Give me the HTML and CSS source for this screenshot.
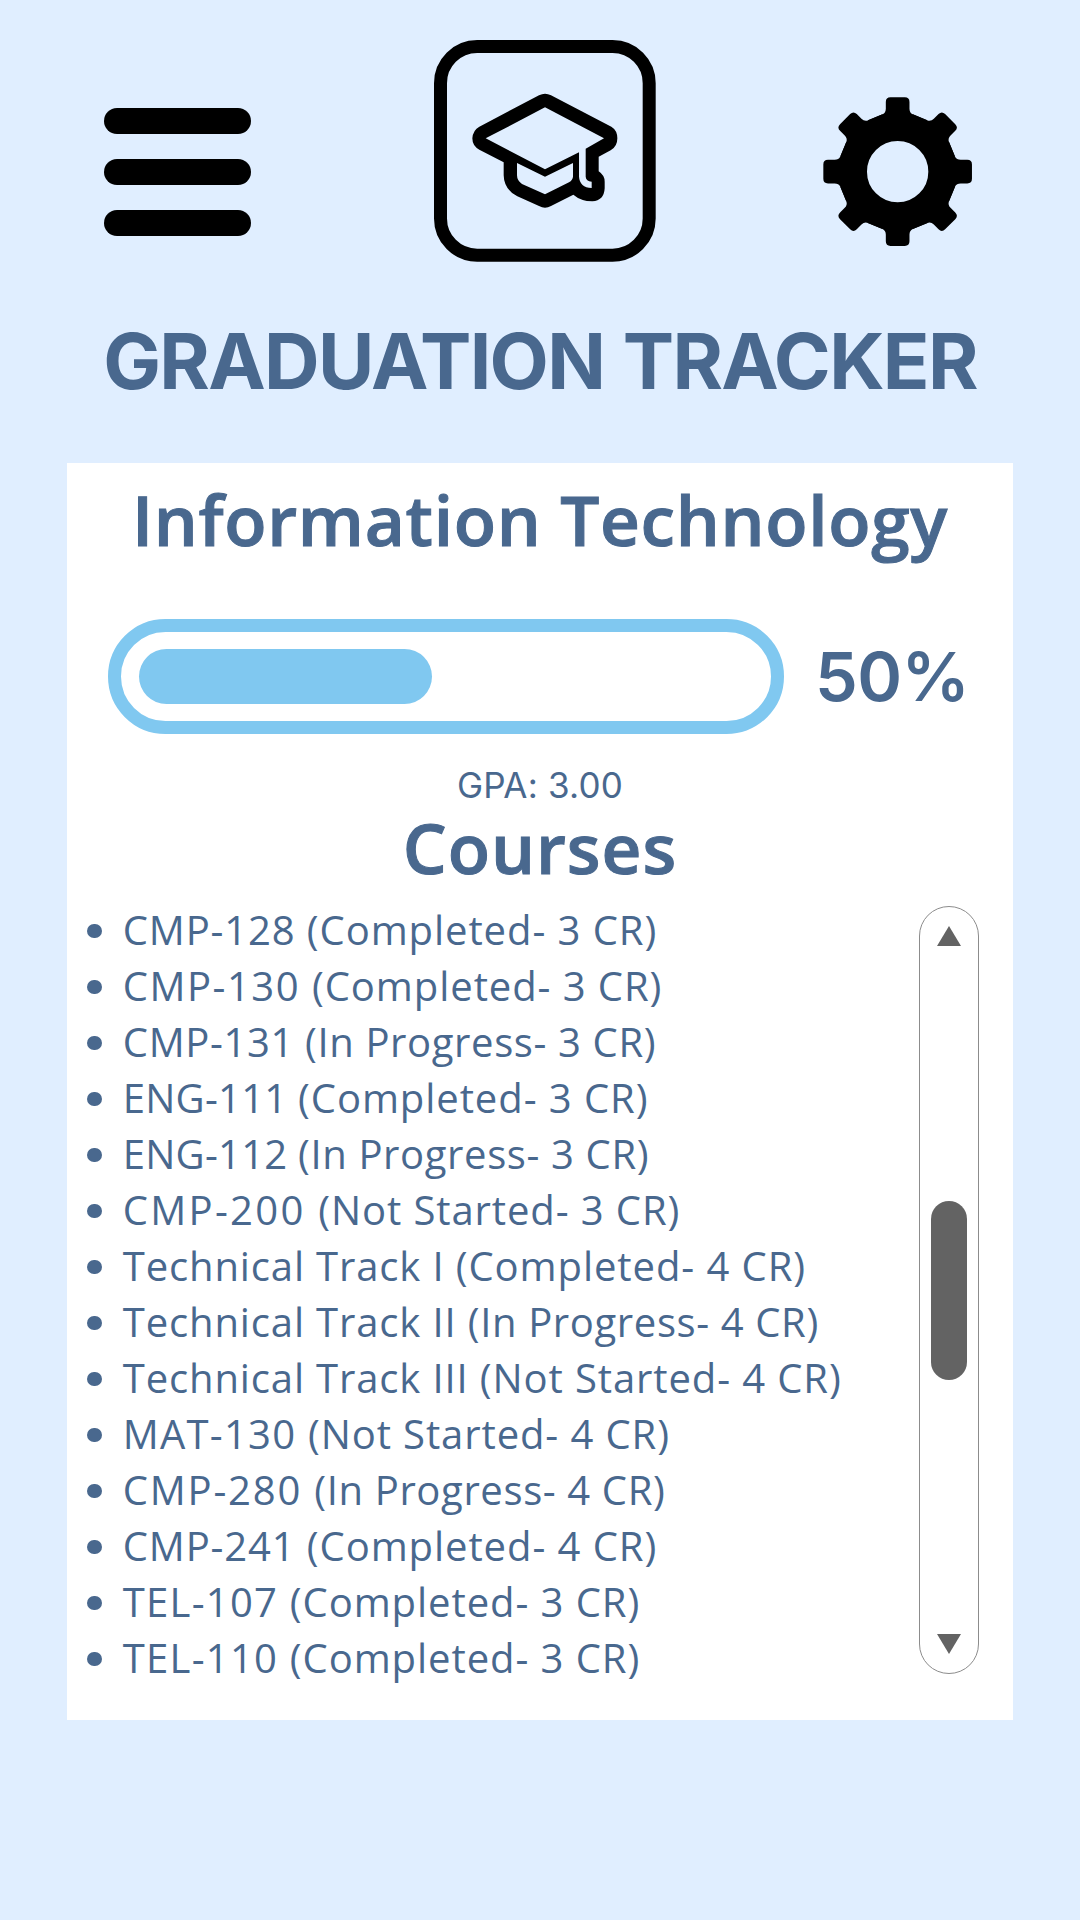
FILE: index.html
```
<!DOCTYPE html>
<html lang="en">
<head>
<meta charset="utf-8">
<title>Graduation Tracker</title>
<link rel="stylesheet" href="styles.css">
</head>
<body>
<header class="topbar">
  <button class="menu" aria-label="Menu"><span class="menu-bar"></span><span class="menu-bar"></span><span class="menu-bar"></span></button>
  <svg class="logo" viewBox="40 30 665 665" aria-hidden="true">
    <rect x="59.5" y="49.5" width="626" height="626" rx="110" fill="none" stroke="#000" stroke-width="39"/>
    <path fill-rule="evenodd" d="M355 196Q373 187 391 196L572 290Q590 301 590 325Q590 350 570 361L534 380V424Q552 436 552 455V475Q550 512 515 514Q480 513 458 494L391 528Q373 538 355 528L290 499Q250 478 249 436V397L176 359Q155 348 155 325Q157 300 176 290ZM195 325L373 418L475 367V440Q477 472 513 474V455Q496 453 495 440V356L550 325L373 232ZM289 399L373 440L457 399V440Q456 450 445 457L373 493L304 462Q289 452 289 436Z"/>
  </svg>
  <svg class="gear" viewBox="-224 -224 448 448" aria-hidden="true">
    <defs><path id="tooth" d="M-89.500 -154L-45.500 -172Q-35.500 -177 -35.500 -189V-209Q-35.500 -223 -21.500 -223H21.500Q35.500 -223 35.500 -209V-189Q35.500 -177 45.500 -172L89.500 -154L60 -115H-60Z"/></defs>
    <circle r="128.500" fill="none" stroke="#000" stroke-width="73"/>
    <use href="#tooth"/><use href="#tooth" transform="rotate(45)"/><use href="#tooth" transform="rotate(90)"/><use href="#tooth" transform="rotate(135)"/><use href="#tooth" transform="rotate(180)"/><use href="#tooth" transform="rotate(225)"/><use href="#tooth" transform="rotate(270)"/><use href="#tooth" transform="rotate(315)"/>
  </svg>
</header>
<h1 class="page-title">GRADUATION TRACKER</h1>
<main class="card">
  <h2 class="program">Information Technology</h2>
  <div class="progress">
    <div class="track"><div class="fill"></div></div>
    <span class="percent">50%</span>
  </div>
  <p class="gpa">GPA: 3.00</p>
  <h2 class="courses-title">Courses</h2>
  <div class="courses">
    <ul class="list">
      <li class="course"><span class="code">CMP-128 </span><span class="done">(Completed- 3 CR)</span></li>
      <li class="course"><span class="code wide">CMP-130 </span><span class="done">(Completed- 3 CR)</span></li>
      <li class="course"><span class="code snug">CMP-131 </span><span class="active">(In Progress- 3 CR)</span></li>
      <li class="course"><span class="code tight">ENG-111 </span><span class="done">(Completed- 3 CR)</span></li>
      <li class="course"><span class="code tight">ENG-112 </span><span class="active">(In Progress- 3 CR)</span></li>
      <li class="course"><span class="code widest">CMP-200 </span><span class="todo">(Not Started- 3 CR)</span></li>
      <li class="course"><span class="code">Technical Track I </span><span class="done">(Completed- 4 CR)</span></li>
      <li class="course"><span class="code">Technical Track II </span><span class="active">(In Progress- 4 CR)</span></li>
      <li class="course"><span class="code">Technical Track III </span><span class="todo">(Not Started- 4 CR)</span></li>
      <li class="course"><span class="code loose">MAT-130 </span><span class="todo">(Not Started- 4 CR)</span></li>
      <li class="course"><span class="code wider">CMP-280 </span><span class="active">(In Progress- 4 CR)</span></li>
      <li class="course"><span class="code">CMP-241 </span><span class="done">(Completed- 4 CR)</span></li>
      <li class="course"><span class="code loose">TEL-107 </span><span class="done">(Completed- 3 CR)</span></li>
      <li class="course"><span class="code loose">TEL-110 </span><span class="done">(Completed- 3 CR)</span></li>
    </ul>
    <div class="scrollbar">
      <svg class="arrow" viewBox="0 0 24 20"><path d="M12 0L24 20H0Z"/></svg>
      <div class="thumb"></div>
      <svg class="arrow" viewBox="0 0 24 20"><path d="M0 0H24L12 20Z"/></svg>
    </div>
  </div>
</main>
</body>
</html>
```
FILE: styles.css
```
* { box-sizing: border-box; }

body {
  margin: 0;
  width: 1080px;
  height: 1920px;
  background: #e0eeff;
  color: #49688e;
  font-family: "Open Sans", sans-serif;
}

h1, h2, p, ul { margin: 0; padding: 0; font-weight: 400; }

.topbar {
  display: flex;
  justify-content: space-between;
  align-items: flex-start;
  height: 315px;
  padding: 40px 107.500px 0 104.300px;
}

.menu {
  display: flex;
  flex-direction: column;
  gap: 25.300px;
  margin-top: 68px;
  padding: 0;
  border: 0;
  background: none;
}

.menu-bar { width: 147px; height: 25.700px; border-radius: 13px; background: #000; }
.logo { width: 221.700px; height: 221.700px; margin-left: 15px; }
.gear { width: 149.300px; height: 149.300px; margin-top: 56.500px; }

.page-title {
  height: 148px;
  font: 700 77px/92px Inter, sans-serif;
  letter-spacing: -1.700px;
  word-spacing: 2px;
  text-align: center;
}

.card {
  display: flex;
  flex-direction: column;
  width: 946px;
  height: 1257px;
  margin: 0 auto;
  padding-top: 9px;
  background: #fff;
}

.program,
.courses-title {
  font-size: 69.300px;
  font-weight: 600;
  text-align: center;
  -webkit-text-stroke: 1px currentColor;
}

.program { line-height: 94px; letter-spacing: 0.700px; }

.progress {
  display: flex;
  align-items: center;
  margin-top: 52.500px;
  padding-left: 41px;
  gap: 31px;
}

.track {
  width: 676px;
  height: 115.500px;
  padding: 17.500px;
  border: 13px solid #80c8f0;
  border-radius: 58px;
}

.fill { width: 293.500px; height: 54.500px; border-radius: 28px; background: #80c8f0; }
.percent { font: 600 68px/80px Inter, sans-serif; letter-spacing: -0.500px; }

.gpa {
  margin-top: 30px;
  font: 400 35px/42px Inter, sans-serif;
  letter-spacing: 0.200px;
  text-align: center;
}

.courses-title { margin-top: 1px; line-height: 80px; letter-spacing: 1px; }

.courses {
  display: flex;
  justify-content: space-between;
  margin-top: 15px;
  padding: 0 34px 0 20px;
}

.list { list-style: none; font-size: 40px; line-height: 56px; }
.course { display: flex; align-items: center; white-space: pre; }

.course::before {
  content: "";
  width: 14.500px;
  height: 14.500px;
  margin: 2px 21.300px 0 0;
  border-radius: 50%;
  background: currentColor;
}

.code { letter-spacing: 0.860px; }
.code.tight { letter-spacing: 0.240px; }
.code.snug { letter-spacing: 0.640px; }
.code.loose { letter-spacing: 1.250px; }
.code.wide { letter-spacing: 1.510px; }
.code.wider { letter-spacing: 1.800px; }
.code.widest { letter-spacing: 2.300px; }
.done { letter-spacing: 0.930px; }
.active { letter-spacing: 0.625px; }
.todo { letter-spacing: 0.900px; }

.scrollbar {
  display: flex;
  flex-direction: column;
  align-items: center;
  justify-content: space-between;
  width: 60px;
  height: 768px;
  margin-top: 4px;
  padding: 19px 0;
  border: 1px solid #8c8c8c;
  border-radius: 30px;
}

.arrow { width: 24px; height: 20px; fill: #636363; }
.thumb { width: 36px; height: 179px; border-radius: 18px; background: #636363; }
```
